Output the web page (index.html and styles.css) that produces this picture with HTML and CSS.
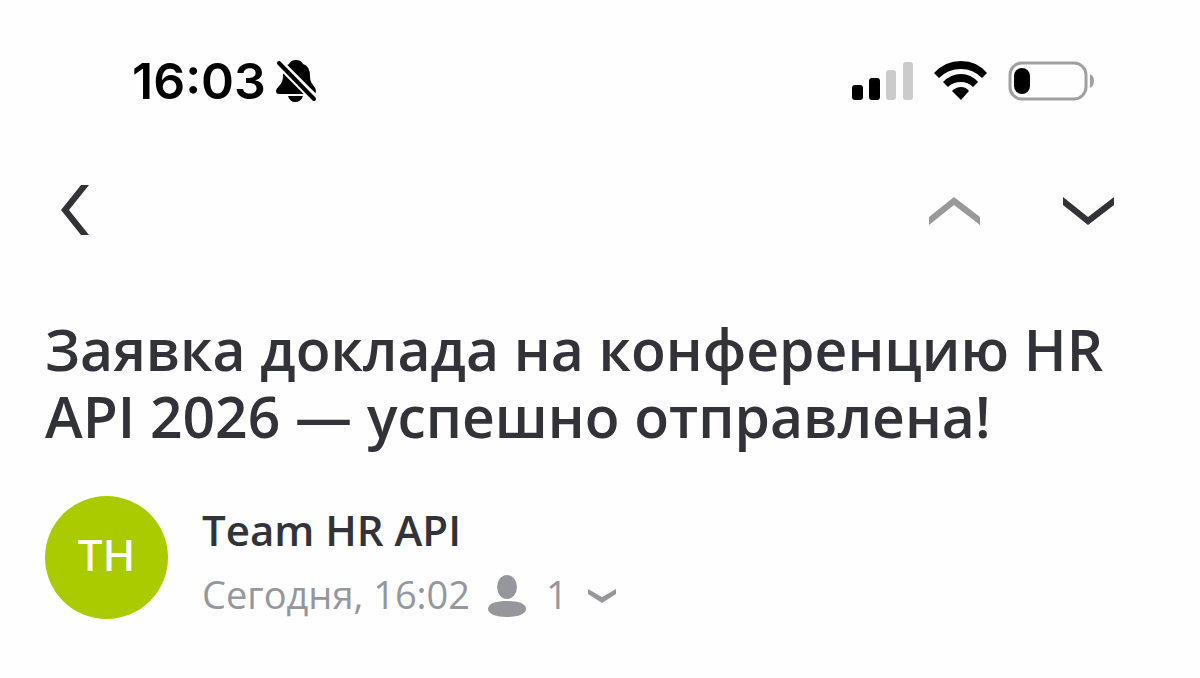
FILE: index.html
```html
<!DOCTYPE html>
<html lang="ru">
  <head>
    <meta charset="UTF-8" />
    <meta name="viewport" content="width=device-width, initial-scale=1.0" />
    <title>Team HR API</title>
    <link rel="stylesheet" href="styles.css">
  </head>
  <body>
    <div class="status-bar">
      <div class="status-left">
        <span class="clock">16:03</span>
        <svg class="bell" width="42" height="44" viewBox="0 0 42 44">
          <path d="M3 35 Q0 35 0 32 Q0 30 3 27 Q7 23 7 17 Q7 7 13 5 Q15 1 20 1 Q25 1 27 5 Q34 7 34 17 Q34 23 37 26 Q40 29 40 32 Q40 35 36 35 Z" />
          <path d="M12 37 H27 Q25 43 19 43 Q14 43 12 37 Z" />
          <path class="bell-gap" d="M-1 0 L42 43" />
          <path class="bell-slash" d="M3 4 L38 40" />
        </svg>
      </div>
      <div class="status-right">
        <svg width="62" height="40" viewBox="0 0 62 40">
          <rect x="0" y="24" width="11" height="15" rx="3" />
          <rect x="17" y="17" width="11" height="22" rx="3" />
          <rect class="bar-off" x="34" y="9" width="10" height="30" rx="3" />
          <rect class="bar-off" x="51" y="1" width="10" height="38" rx="3" />
        </svg>
        <svg width="54" height="40" viewBox="0 0 54 40">
          <path d="M0 12 Q11 0 27 0 Q43 0 53 12 L48 17 Q39 8 27 8 Q14 8 5 17 Z" />
          <path d="M9 21 Q17 13 27 13 Q37 13 44 21 L39 26 Q34 21 27 21 Q19 21 14 26 Z" />
          <path d="M18 30 Q22 26 27 26 Q32 26 35 30 L27 39 Z" />
        </svg>
        <svg width="88" height="40" viewBox="0 0 88 40">
          <rect class="battery-case" x="2" y="2" width="76" height="36" rx="12" />
          <rect x="6" y="7" width="16" height="26" rx="8" />
          <path class="battery-tip" d="M82 13 Q86 15 86 20 Q86 25 82 27 Z" />
        </svg>
      </div>
    </div>

    <div class="nav">
      <button class="nav-btn" aria-label="Назад">
        <svg width="28" height="52" viewBox="0 0 28 52">
          <path d="M20 0 H28 L8 25 L28 50 H20 L0 25 Z" />
        </svg>
      </button>
      <div class="nav-right">
        <button class="nav-btn" aria-label="Предыдущее письмо" disabled>
          <svg width="52" height="28" viewBox="0 0 52 28">
            <path d="M1 20 L26 0 L52 20 V28 L26 8 L1 28 Z" />
          </svg>
        </button>
        <button class="nav-btn" aria-label="Следующее письмо">
          <svg width="52" height="28" viewBox="0 0 52 28">
            <path d="M1 0 L26 20 L52 0 V8 L26 28 L1 8 Z" />
          </svg>
        </button>
      </div>
    </div>

    <main class="mail">
      <h1>Заявка доклада на конференцию HR API 2026 — успешно отправлена!</h1>
      <div class="sender">
        <div class="avatar">TH</div>
        <div class="sender-info">
          <div class="sender-name">Team HR API</div>
          <div class="meta">
            <span>Сегодня, 16:02</span>
            <button class="recipients" aria-label="Получатели: 1">
              <svg width="38" height="48" viewBox="0 0 38 48">
                <ellipse cx="19" cy="17" rx="10" ry="12" />
                <path d="M0 39 C0 33 9 31 19 31 C29 31 38 33 38 39 C38 44 30 47 19 47 C8 47 0 44 0 39 Z" />
              </svg>
              <span>1</span>
              <svg width="28" height="20" viewBox="0 0 28 20">
                <path d="M0 5 L14 13 L28 5 V10 L14 19 L0 10 Z" />
              </svg>
            </button>
          </div>
        </div>
      </div>
    </main>
  </body>
</html>
```

FILE: styles.css
```css
* {
  box-sizing: border-box;
}
body {
  margin: 0;
  background-color: #fefefe;
  color: #323338;
  font-family: "Open Sans", "Noto Sans", sans-serif;
}
svg {
  display: block;
  flex-shrink: 0;
}
button {
  padding: 0;
  border: none;
  background: none;
  color: inherit;
  font: inherit;
}
button svg {
  fill: currentColor;
}
.status-bar {
  display: flex;
  justify-content: space-between;
  align-items: center;
  height: 162px;
  padding: 0 104px 0 132px;
  color: #000;
}
.status-left {
  display: flex;
  align-items: center;
  gap: 10px;
}
.clock {
  font-family: Inter, sans-serif;
  font-size: 50px;
  font-weight: 600;
}
.bell-gap {
  fill: none;
  stroke: #fefefe;
  stroke-width: 9;
}
.bell-slash {
  fill: none;
  stroke: #000;
  stroke-width: 4;
  stroke-linecap: round;
}
.status-right {
  display: flex;
  align-items: center;
  gap: 20px;
}
.bar-off {
  fill: #cbcbcb;
}
.battery-case {
  fill: none;
  stroke: #a0a0a0;
  stroke-width: 3;
}
.battery-tip {
  fill: #a0a0a0;
}
.nav {
  display: flex;
  justify-content: space-between;
  align-items: center;
  height: 98px;
  padding: 0 86px 0 61px;
}
.nav-right {
  display: flex;
  gap: 82px;
}
.nav-btn:disabled {
  color: #999;
}
.mail {
  padding: 56px 45px 54px;
}
h1 {
  margin: 0 0 46px;
  font-size: 57px;
  font-weight: 600;
  line-height: 67px;
}
.sender {
  display: flex;
  align-items: flex-start;
  gap: 34px;
}
.avatar {
  display: flex;
  align-items: center;
  justify-content: center;
  width: 123px;
  height: 123px;
  flex-shrink: 0;
  padding-bottom: 8px;
  border-radius: 50%;
  background-color: #a9cb00;
  color: #fff;
  font-family: "Noto Sans", sans-serif;
  font-size: 44px;
  font-weight: 500;
}
.sender-name {
  font-size: 42px;
  font-weight: 600;
  line-height: 68px;
}
.meta {
  display: flex;
  align-items: center;
  gap: 18px;
  color: #95979d;
  font-size: 38px;
  line-height: 60px;
}
.recipients {
  display: flex;
  align-items: center;
  gap: 20px;
}
```
